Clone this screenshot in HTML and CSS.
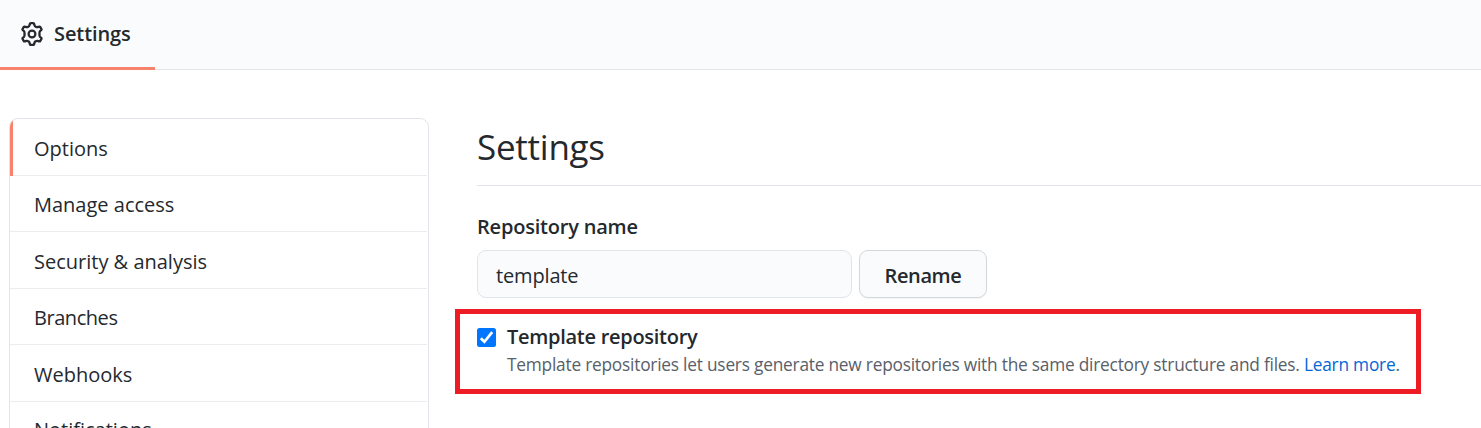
FILE: index.html
```html
<!DOCTYPE html>
<html lang="en">
<head>
<meta charset="utf-8">
<title>Settings</title>
<link rel="stylesheet" href="styles.css">
</head>
<body>
<header class="tabs">
  <a class="tab">
    <svg class="gear" viewBox="0 0 24 24" fill="none" stroke="currentColor" stroke-width="2.2" stroke-linejoin="round">
      <path transform="translate(12 12) scale(1.07 1) translate(-12 -12)" d="M10.8 1.2h2.4q.6 0 .8.7l.4 1.7c.2.8 1.8 1.7 2.6 1.5l1.7-.5q.6-.2.9.3l1.2 2.1q.3.5-.1 1l-1.3 1.3c-.6.6-.6 4.8 0 5.4l1.3 1.3q.4.5.1 1l-1.2 2.1q-.3.5-.9.3l-1.7-.5c-.8-.2-2.4.7-2.6 1.5l-.4 1.7q-.2.7-.8.7h-2.4q-.6 0-.8-.7l-.4-1.7c-.2-.8-1.8-1.7-2.6-1.5l-1.7.5q-.6.2-.9-.3l-1.2-2.1q-.3-.5.1-1l1.3-1.3c.6-.6.6-4.8 0-5.4l-1.3-1.3q-.4-.5-.1-1l1.2-2.1q.3-.5.9-.3l1.7.5c.8.2 2.4-.7 2.6-1.5l.4-1.7q.2-.7.8-.7z"/>
      <circle cx="12" cy="12" r="3.4"/>
    </svg>
    <span class="tab-label">Settings</span>
  </a>
</header>
<main class="layout">
  <nav class="menu">
    <a class="item selected">Options</a>
    <a class="item">Manage access</a>
    <a class="item">Security &amp; analysis</a>
    <a class="item branches">Branches</a>
    <a class="item">Webhooks</a>
    <a class="item last">Notifications</a>
  </nav>
  <section class="content">
    <h1 class="title">Settings</h1>
    <label class="label" for="name">Repository name</label>
    <div class="row">
      <input class="input" id="name" type="text" value="template">
      <button class="button">Rename</button>
    </div>
    <div class="highlight">
      <svg class="check" viewBox="0 0 19 19"><rect width="19" height="19" rx="2.5" fill="#0075ff"/><path d="M3.8 10.2l3.6 3.6L15.2 4.2" fill="none" stroke="#fff" stroke-width="2.7"/></svg>
      <div class="option">
        <strong class="option-title">Template repository</strong>
        <p class="note">Template repositories let users generate new repositories with the same directory structure and files. <a class="link">Learn more</a>.</p>
      </div>
    </div>
  </section>
</main>
</body>
</html>
```
FILE: styles.css
```css
* { box-sizing: border-box; }
body {
  margin: 0;
  height: 428px;
  overflow: hidden;
  background: #fff;
  color: #24292e;
  font-family: "Open Sans", "Noto Sans", sans-serif;
  font-size: 20px;
}
.tabs {
  display: flex;
  height: 70px;
  background: #fafbfc;
  box-shadow: inset 0 -1px #e1e4e8;
}
.tab {
  display: flex;
  align-items: center;
  width: 155px;
  height: 70px;
  padding-left: 20px;
  border-bottom: 3px solid #f9826c;
}
.gear { width: 24px; height: 24px; margin-right: 10px; overflow: visible; }
.tab-label { font-weight: 550; font-size: 20px; letter-spacing: -.1px; white-space: nowrap; }
.layout {
  display: grid;
  grid-template-columns: 420px 1fr;
  column-gap: 48px;
  height: 358px;
  padding: 48px 0 0 9px;
  align-items: start;
  overflow: hidden;
}
.menu {
  border: 1px solid #e1e4e8;
  border-radius: 9px;
  padding-right: 1px;
  overflow: hidden;
}
.item {
  display: flex;
  align-items: center;
  height: 56.5px;
  padding: 3px 0 0 24px;
  border-bottom: 1px solid #eaecef;
  white-space: nowrap;
}
.selected { border-left: 3px solid #f9826c; border-bottom: 0; box-shadow: inset 0 -1px #eaecef; padding: 2px 0 0 21px; }
.branches { letter-spacing: -.45px; }
.last { padding-top: 1px; }
.content { min-width: 0; }
.title {
  height: 68px;
  margin: 0 0 26px;
  border-bottom: 1px solid #e1e4e8;
  font-size: 35px;
  font-weight: 400;
  letter-spacing: -.25px;
  line-height: 57px;
}
.label {
  display: block;
  height: 38px;
  font-size: 20px;
  font-weight: 550;
  letter-spacing: -.2px;
  line-height: 30px;
}
.row { display: flex; gap: 7px; }
.input {
  width: 375px;
  height: 48px;
  padding: 3px 18px 0;
  border: 1px solid #e1e4e8;
  border-radius: 9px;
  background: #fafbfc;
  color: #24292e;
  font: inherit;
  letter-spacing: -.15px;
}
.button {
  width: 128px;
  height: 48px;
  padding: 3px 0 0;
  border: 1px solid #d5d8da;
  border-radius: 9px;
  background: #fafbfc;
  box-shadow: 0 1px 1px rgba(27, 31, 35, .05);
  color: #24292e;
  font: 550 20px "Open Sans", sans-serif;
  letter-spacing: -.4px;
}
.highlight {
  display: flex;
  width: 966px;
  height: 85px;
  margin: 11px 0 0 -22px;
  padding: 14px 0 0 17px;
  border: 5px solid #ed1c24;
}
.check { width: 19px; height: 19px; margin-right: 11px; }
.option-title { display: block; font-size: 20px; font-weight: 550; letter-spacing: -.28px; line-height: 18px; }
.note {
  margin: 6px 0 0;
  color: #586069;
  font-size: 17.3px;
  letter-spacing: -.215px;
  line-height: 26px;
  white-space: nowrap;
}
.link { color: #0366d6; }
```
